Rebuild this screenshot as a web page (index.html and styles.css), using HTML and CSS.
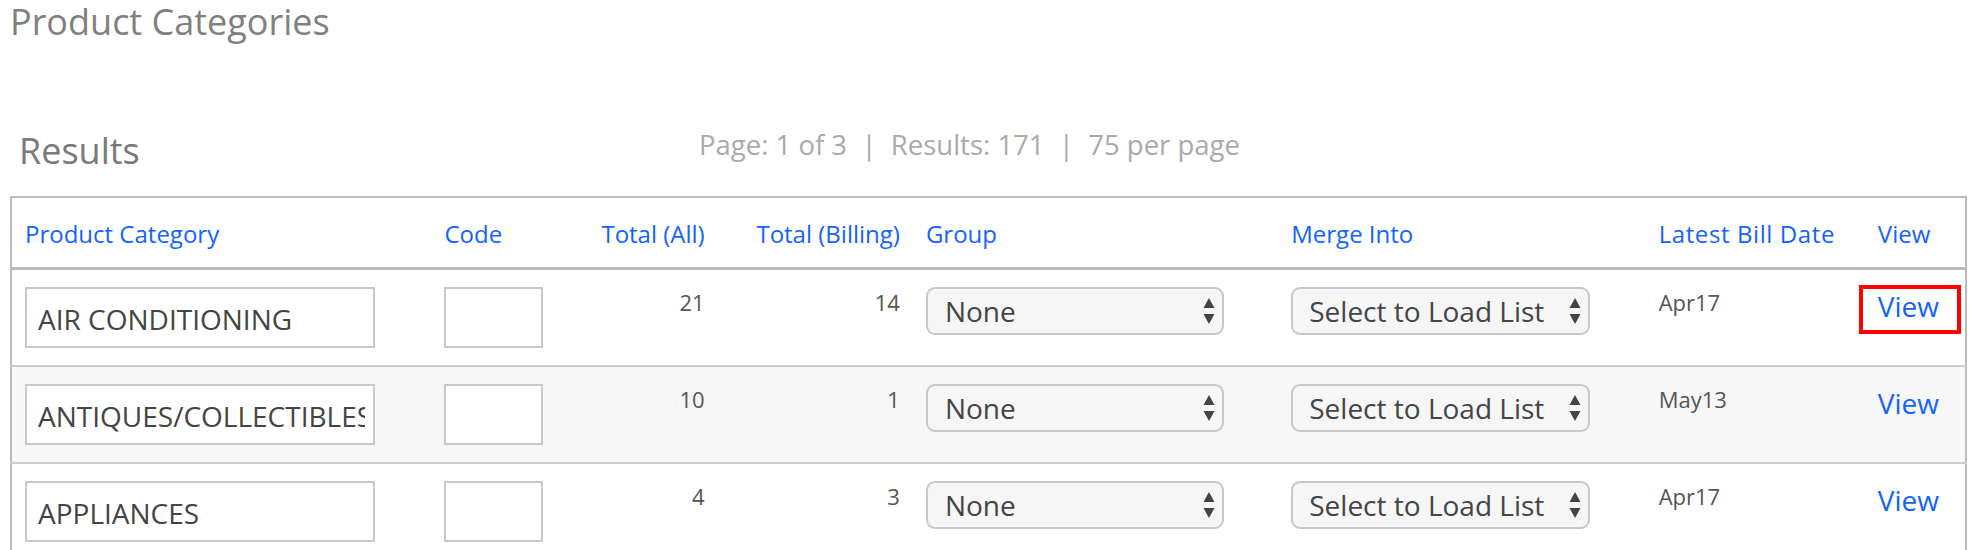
FILE: index.html
```html
<!DOCTYPE html>
<html lang="en">
<head>
<meta charset="utf-8">
<title>Product Categories</title>
<link rel="stylesheet" href="styles.css">
</head>
<body>
<h1 class="page-title">Product Categories</h1>
<div class="results-bar">
  <h2 class="results-title">Results</h2>
  <div class="pager">Page: 1 of 3 &nbsp;|&nbsp; Results: 171 &nbsp;|&nbsp; 75 per page</div>
</div>
<table class="grid">
  <colgroup>
    <col class="c1"><col class="c2"><col class="c3"><col class="c4"><col class="c5"><col class="c6"><col class="c7"><col class="c8">
  </colgroup>
  <thead>
    <tr>
      <th>Product Category</th>
      <th>Code</th>
      <th class="num">Total (All)</th>
      <th class="num">Total (Billing)</th>
      <th>Group</th>
      <th>Merge Into</th>
      <th class="wide">Latest Bill Date</th>
      <th>View</th>
    </tr>
  </thead>
  <tbody>
    <tr>
      <td><input class="name-input" type="text" value="AIR CONDITIONING"></td>
      <td><input class="code-input" type="text" value=""></td>
      <td class="num">21</td>
      <td class="num">14</td>
      <td><span class="sel sel-group"><select><option>None</option></select><svg class="arrows" viewBox="0 0 12 26" width="12" height="26"><path d="M6 0 L11.5 10 L0.5 10 Z M0.5 16 L11.5 16 L6 26 Z" fill="#444"/></svg></span></td>
      <td><span class="sel sel-merge"><select><option>Select to Load List</option></select><svg class="arrows" viewBox="0 0 12 26" width="12" height="26"><path d="M6 0 L11.5 10 L0.5 10 Z M0.5 16 L11.5 16 L6 26 Z" fill="#444"/></svg></span></td>
      <td class="date">Apr17</td>
      <td><a class="view-link highlighted" href="#">View</a></td>
    </tr>
    <tr class="alt">
      <td><input class="name-input" type="text" value="ANTIQUES/COLLECTIBLES"></td>
      <td><input class="code-input" type="text" value=""></td>
      <td class="num">10</td>
      <td class="num">1</td>
      <td><span class="sel sel-group"><select><option>None</option></select><svg class="arrows" viewBox="0 0 12 26" width="12" height="26"><path d="M6 0 L11.5 10 L0.5 10 Z M0.5 16 L11.5 16 L6 26 Z" fill="#444"/></svg></span></td>
      <td><span class="sel sel-merge"><select><option>Select to Load List</option></select><svg class="arrows" viewBox="0 0 12 26" width="12" height="26"><path d="M6 0 L11.5 10 L0.5 10 Z M0.5 16 L11.5 16 L6 26 Z" fill="#444"/></svg></span></td>
      <td class="date">May13</td>
      <td><a class="view-link" href="#">View</a></td>
    </tr>
    <tr>
      <td><input class="name-input" type="text" value="APPLIANCES"></td>
      <td><input class="code-input" type="text" value=""></td>
      <td class="num">4</td>
      <td class="num">3</td>
      <td><span class="sel sel-group"><select><option>None</option></select><svg class="arrows" viewBox="0 0 12 26" width="12" height="26"><path d="M6 0 L11.5 10 L0.5 10 Z M0.5 16 L11.5 16 L6 26 Z" fill="#444"/></svg></span></td>
      <td><span class="sel sel-merge"><select><option>Select to Load List</option></select><svg class="arrows" viewBox="0 0 12 26" width="12" height="26"><path d="M6 0 L11.5 10 L0.5 10 Z M0.5 16 L11.5 16 L6 26 Z" fill="#444"/></svg></span></td>
      <td class="date">Apr17</td>
      <td><a class="view-link" href="#">View</a></td>
    </tr>
  </tbody>
</table>
</body>
</html>
```
FILE: styles.css
```css
html, body {
  margin: 0;
  padding: 0;
  background: #fff;
}
body {
  font-family: "Open Sans", "Noto Sans", sans-serif;
  color: #444;
  overflow: hidden;
}
.page-title {
  margin: 0;
  padding: 0 0 0 10px;
  font-size: 36px;
  line-height: 44px;
  font-weight: 400;
  color: #808080;
}
.results-bar {
  display: grid;
  grid-template-columns: 699px auto;
  align-items: center;
  margin-top: 78px;
  height: 46px;
}
.results-title {
  margin: 0;
  padding-left: 19px;
  font-size: 36px;
  font-weight: 400;
  line-height: 44px;
  color: #7a7a7a;
  position: relative;
  top: 6px;
}
.pager {
  font-size: 27.5px;
  color: #aaa;
  line-height: 34px;
}
.grid {
  margin: 28px 0 0 10px;
  width: 1957px;
  table-layout: fixed;
  border-collapse: collapse;
  border: 2px solid #bbb;
}
.c1 { width: 420px; }
.c2 { width: 156px; }
.c3 { width: 130px; }
.c4 { width: 195px; }
.c5 { width: 365px; }
.c6 { width: 367px; }
.c7 { width: 219px; }
.c8 { width: 101px; }
.grid th {
  height: 67px;
  padding: 2px 13px 0;
  text-align: left;
  font-weight: 400;
  font-size: 24px;
  color: #1463ff;
  border-bottom: 3px solid #bbb;
  vertical-align: middle;
  white-space: nowrap;
}
.grid th.wide {
  letter-spacing: 0.6px;
}
.grid td {
  height: 97px;
  padding: 17px 13px 0;
  vertical-align: top;
  border-bottom: 2px solid #ccc;
  box-sizing: border-box;
  font-size: 22px;
  line-height: 28px;
  color: #555;
}
.grid tr.alt td {
  background: #f7f7f7;
}
.grid .num {
  text-align: right;
}
.grid td.num, .grid td.date {
  padding-top: 18px;
}
.name-input, .code-input {
  box-sizing: border-box;
  height: 61px;
  border: 2px solid #c8c8c8;
  border-radius: 0;
  background: #fff;
  font-family: "Open Sans", sans-serif;
  font-size: 28px;
  color: #444;
  padding: 3px 8px 0 11px;
  margin: 0;
  outline: none;
}
.name-input { width: 350px; }
.code-input { width: 99px; }
.sel {
  position: relative;
  display: inline-block;
}
.sel select {
  -webkit-appearance: none;
  appearance: none;
  box-sizing: border-box;
  height: 48px;
  border: 2px solid #c8c8c8;
  border-radius: 9px;
  background: #f6f6f6;
  font-family: "Open Sans", sans-serif;
  font-size: 28px;
  color: #444;
  padding: 0 0 0 17px;
  margin: 0;
}
.sel-group select { width: 298px; }
.sel-merge select { width: 299px; padding-left: 16px; }
.sel .arrows {
  position: absolute;
  right: 9px;
  top: 11px;
  pointer-events: none;
}
.view-link {
  display: inline-block;
  font-size: 28px;
  line-height: 34px;
  color: #1463ff;
  text-decoration: none;
  padding: 0 18px 7px 15px;
  margin: 2px 0 0 -15px;
}
.view-link.highlighted {
  outline: 4px solid #f00;
  outline-offset: 0;
}
```
